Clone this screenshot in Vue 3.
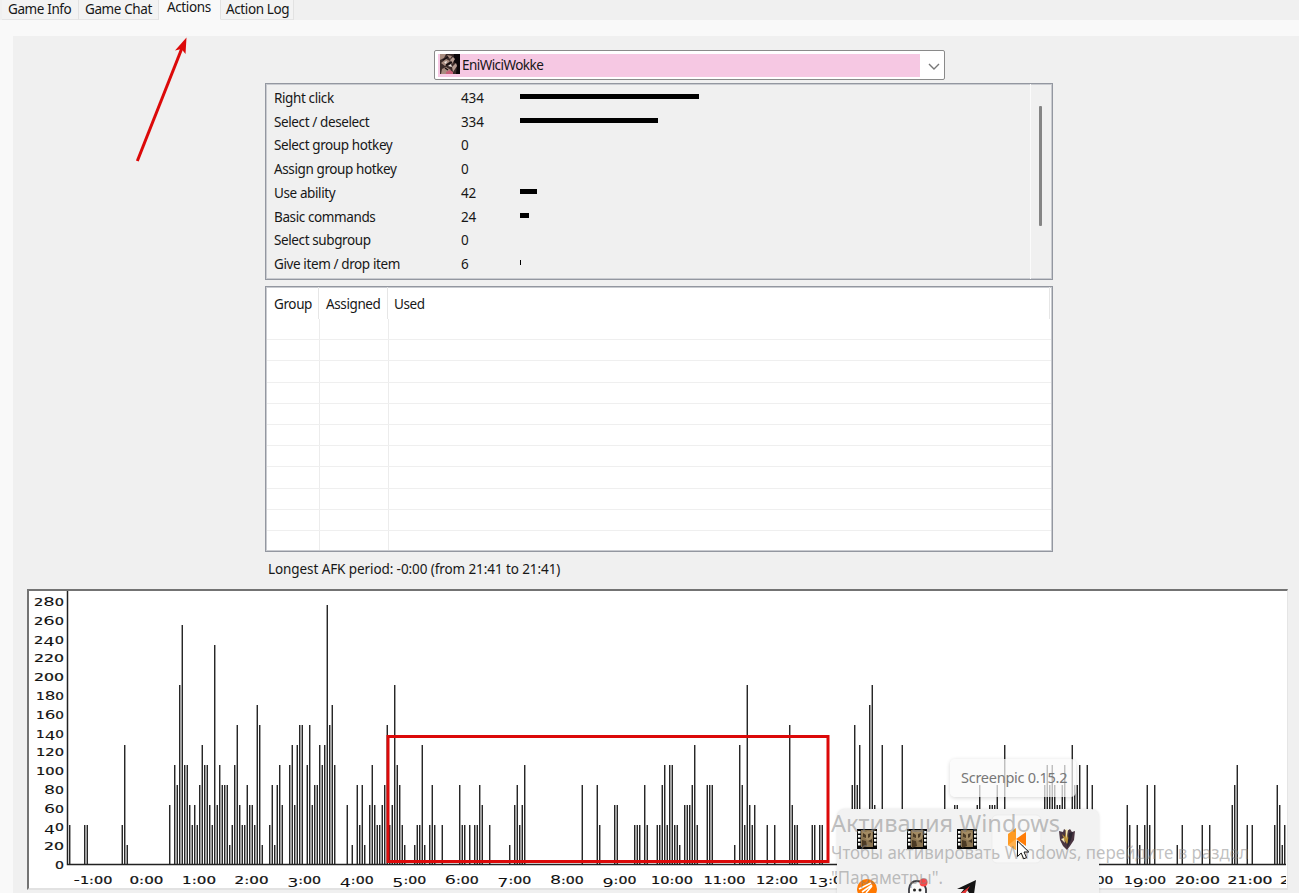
<script setup>
const tabs = [
  { name: 'Game Info', cls: 't1' },
  { name: 'Game Chat', cls: 't2' },
  { name: 'Actions', cls: 't3 active' },
  { name: 'Action Log', cls: 't4' },
]
const actions = [
  ['Right click', 434, 179],
  ['Select / deselect', 334, 138],
  ['Select group hotkey', 0, 0],
  ['Assign group hotkey', 0, 0],
  ['Use ability', 42, 17],
  ['Basic commands', 24, 9],
  ['Select subgroup', 0, 0],
  ['Give item / drop item', 6, 1.4],
]
// Each run is "first slot: level of every consecutive slot".
const runs = `0:2 6:22 21:261 40:3 42:549C553232465532B354441257322433287
77:1 80:241453 88:563677 95:57344656D785 111:3 113:1 115:4241 120:353223472395421
138:12261 144:242 149:2 156:422 160:2 162:2243 168:2 176:1 178:34235 205:4 211:42
218:33 226:222 230:42 235:2245255221 246:333462 255:444 266:1 268:6429323 279:2 282:2
288:7322 297:22 300:22 313:4746 320:893 325:6 333:6 350:4 354:33 363:34 368:3334
374:6 390:454543345 401:6445 407:5 409:4 423:32 427:21 430:242 434:4 443:1 445:2
453:2 456:2 465:345 471:2 473:2 482:24312`
const bars = []
for (const run of runs.split(/\s+/)) {
  const [start, levels] = run.split(':')
  ;[...levels].forEach((c, k) => {
    const n = parseInt(c, 16)
    bars.push({ x: 41.6 + 2.5 * (+start + k), h: 20 * n - 1 })
  })
}
const yTicks = Array.from({ length: 15 }, (_, i) => i * 20)
const yWidth = (n) => (n >= 200 ? 30 : n >= 100 ? 28 : n > 0 ? 20 : 9)
const xTicks = Array.from({ length: 24 }, (_, i) => i - 1)
const xWidth = (n) => (n < 0 ? 39 : n >= 20 ? 45 : n >= 10 ? 42 : 34)
// Old-style figures: 0-2 stay at x-height, 3 4 5 7 9 hang below the baseline.
const figures = (s) => {
  let y = 0
  return [...String(s)].map((c) => {
    const target = '34579'.includes(c) ? 2.5 : 0
    const dy = target - y
    y = target
    return { c, dy, cls: '012:'.includes(c) ? 'low' : 'tall' }
  })
}
</script>

<template>
  <div class="app">
    <nav class="tabs">
      <div v-for="t in tabs" :key="t.name" class="tab" :class="t.cls"><span>{{ t.name }}</span></div>
    </nav>
    <main class="page">
      <div class="column">
        <div class="select">
          <div class="choice">
            <svg class="avatar" width="20" height="20" viewBox="0 0 20 20">
              <rect width="20" height="20" fill="#3c2c2a" />
              <path d="M0 0h6l-2 4-4 2zM1 9l5-4 4 2-5 5zM7 1l5 1-2 3zM2 15l4-2 5 3-4 4H1z" fill="#a98d80" />
              <path d="M14 0h6v20h-4l1-9-4-4z" fill="#0c0709" />
              <path d="M10 6l3-3 2 2-3 5zM12 13l4-4 1 3-4 6z" fill="#b49b90" />
              <path d="M4 8l3-1-1 3zM8 12l3-2 1 3z" fill="#f0e8e2" />
              <path d="M6 18l4-2 3 2v2H6z" fill="#c85f78" />
              <path d="M3 6l5-3M6 11l6-3M5 14l3 2" stroke="#160e10" stroke-width="1.4" />
            </svg>
            <span>EniWiciWokke</span>
          </div>
          <svg class="chev" width="12" height="8" viewBox="0 0 12 8"><path d="M1 1l5 5 5-5" fill="none" stroke="#777" stroke-width="1.4" /></svg>
        </div>
        <section class="stats">
          <div class="rows">
            <div v-for="a in actions" :key="a[0]" class="row">
              <span class="name">{{ a[0] }}</span>
              <span class="num">{{ a[1] }}</span>
              <i class="meter" :style="{ width: a[2] + 'px' }"></i>
            </div>
          </div>
          <div class="scroll"><i></i></div>
        </section>
        <section class="groups">
          <div class="head"><span class="g1">Group</span><span class="g2">Assigned</span><span class="g3">Used</span></div>
          <div class="body">
            <div v-for="n in 11" :key="n" class="line"><i></i><i></i></div>
          </div>
        </section>
        <p class="afk">Longest AFK period: -0:00 (from 21:41 to 21:41)</p>
      </div>
      <section class="chart">
        <svg width="1258" height="299" viewBox="0 0 1258 299">
          <rect v-for="b in bars" :key="b.x" :x="b.x - 0.5" :y="273 - b.h" width="1.3" :height="b.h" fill="#111" />
          <path d="M39.500 0V273.500H1258" fill="none" stroke="#222" stroke-width="1.500" />
          <g class="axis">
            <text v-for="n in yTicks" :key="n" x="36" :y="278 - n * 0.939" text-anchor="end" :textLength="yWidth(n)" lengthAdjust="spacingAndGlyphs"><tspan v-for="(f, k) in figures(n)" :key="k" :dy="f.dy" :class="f.cls">{{ f.c }}</tspan></text>
            <text v-for="n in xTicks" :key="n" :x="118.500 + n * 52.55 - (n < 0 ? 1 : 0)" y="293" text-anchor="middle" :textLength="xWidth(n)" lengthAdjust="spacingAndGlyphs"><tspan v-for="(f, k) in figures(n + ':00')" :key="k" :dy="f.dy" :class="f.cls">{{ f.c }}</tspan></text>
          </g>
        </svg>
      </section>
    </main>

    <svg class="notes" width="1299" height="893" viewBox="0 0 1299 893">
      <path d="M137.300 161L182 48" stroke="#dc0909" stroke-width="3" />
      <path d="M186.500 37.500L185.500 54L181.500 49L175 50.500Z" fill="#dc0909" />
      <rect x="388" y="736.500" width="440" height="125" fill="none" stroke="#dc0909" stroke-width="3" />
    </svg>

    <aside class="tray">
      <svg width="262" height="84" viewBox="0 0 262 84">
        <rect x="155" y="6" width="49" height="48" rx="5" fill="#f8f8f8" stroke="#ededed" />
        <g v-for="x in [20, 70, 120]" :key="x" :transform="`translate(${x} 20)`">
          <rect width="20" height="20" fill="#080808" />
          <rect x="4" y="1" width="12" height="17" fill="#8b7450" />
          <path d="M5 2l4 1 2-1 4 1v6l-2 4-3-2-4-3z" fill="#a48c64" />
          <path d="M6 4l3 2v3l-3-1zM11 5l3-1-1 4-2 1zM5 11l4 1 1 5-5 2zM11 12l4-2v4z" fill="#4b3a25" />
          <path d="M1 2h2.500v2.500H1zM1 6h2.500v2.500H1zM1 10h2.500v2.500H1zM1 14h2.500v2.500H1zM17 2h2.500v2.500H17zM17 6h2.500v2.500H17zM17 10h2.500v2.500H17zM17 14h2.500v2.500H17z" fill="#f4f4ee" />
        </g>
        <path d="M171 25l8-6v22l-8-5z" fill="#ff9a22" />
        <path d="M171 36l8-6v11z" fill="#ffb04c" />
        <path d="M179 30l10-7v14z" fill="#ff7d08" />
        <path d="M222 22l4 1 1-3 3 2 3-2 2 3 3-1-1 9-4 6-3 4-4-4-3-6z" fill="#4a3541" />
        <path d="M225 25l3 3 1-7 2 8 4-4-2 6-3 4-3-5z" fill="#b88f35" />
        <path d="M228.500 20l1 10 1.500-9zM224 30l4 4-1-5z" fill="#f5e6b2" />
        <path d="M232 24l4-1-2 8-4 8 1-8z" fill="#2b2430" />
        <circle cx="30" cy="80" r="10" fill="#ff7800" />
        <path d="M22 80l12-6M25 83l10-7M29 84l6-7" fill="none" stroke="#fff" stroke-width="1.600" />
        <path d="M72 84v-4q1-8 8-8t9 8v4" fill="#fafafa" stroke="#3b3b40" stroke-width="1.800" />
        <circle cx="77.500" cy="81" r="1.500" fill="#222" /><circle cx="83" cy="81" r="1.500" fill="#222" />
        <circle cx="86.500" cy="73.500" r="4" fill="#fa4646" />
        <path d="M120 80l19-9-2 14h-4l-3-4-5 4h-2l4-5z" fill="#151515" />
        <path d="M124 84l9-7-5 8z" fill="#e23333" />
      </svg>
    </aside>
    <div class="tip"><span>Screenpic 0.15.2</span></div>
    <svg class="notes" width="1299" height="893" viewBox="0 0 1299 893">
      <g class="mark">
        <text x="831" y="832" class="big" textLength="229" lengthAdjust="spacingAndGlyphs">Активация Windows</text>
        <text x="831" y="859" class="small" textLength="418" lengthAdjust="spacingAndGlyphs">Чтобы активировать Windows, перейдите в раздел</text>
        <text x="831" y="884" class="small" textLength="112" lengthAdjust="spacingAndGlyphs">"Параметры".</text>
      </g>
      <path d="M1017.500 841v15.500l3.700-3.500 2.500 5.800 2.800-1.200-2.500-5.600h4.800z" fill="#fff" stroke="#111" />
    </svg>
  </div>
</template>

<style>
body { margin: 0; }
</style>
<style scoped>
.app { position: relative; width: 1299px; height: 893px; overflow: hidden; background: #f9f9f9; font: 13.5px/18px "Noto Sans", sans-serif; letter-spacing: -.39px; color: #171717; white-space: nowrap; }
.tabs { display: flex; height: 20px; background: #f0f0f0; padding-left: 2px; box-sizing: border-box; }
.tab { height: 20px; box-sizing: border-box; background: #f3f3f3; border-right: 1px solid #e2e2e2; border-bottom: 1px solid #e5e5e5; padding-left: 6px; }
.t1 { width: 77px; }
.t2 { width: 80px; }
.t3 { width: 62px; }
.t4 { width: 73px; padding-left: 5px; }
.tab.active { background: #f9f9f9; border-bottom-color: #f9f9f9; padding-left: 8px; line-height: 14px; }
.page { margin: 16px 0 0 13px; height: 857px; background: #f0f0f0; padding-top: 14px; box-sizing: border-box; }
.column { width: 788px; margin-left: 252px; display: flex; flex-direction: column; }
.select { width: 511px; height: 30px; box-sizing: border-box; margin-left: 169px; border: 1px solid #8a8a8a; border-radius: 2px; background: #fff; padding: 3px; display: flex; align-items: center; }
.choice { background: #f6c8e3; width: 482px; height: 23px; display: flex; align-items: center; gap: 2px; letter-spacing: -.55px; }
.choice .avatar { margin: -2px 0 0 2px; }
.chev { margin: 3px 0 0 8px; }
.stats { margin-top: 3px; height: 197px; box-sizing: border-box; border: 1px solid #9397a0; box-shadow: inset 0 0 0 1px #c9cbd0; display: flex; }
.rows { flex: 1; padding-top: 2px; }
.row { display: flex; align-items: center; height: 23.75px; padding-left: 8px; }
.name { width: 187px; }
.num { width: 59px; letter-spacing: -.1px; }
.meter { height: 5px; background: #000; margin-top: -3px; }
.scroll { width: 22px; border-left: 1px solid #fbfbfb; box-sizing: border-box; display: flex; padding: 22px 0 0 8px; }
.scroll i { width: 3px; height: 120px; background: #858585; border-radius: 1px; }
.groups { margin-top: 6px; height: 266px; box-sizing: border-box; border: 1px solid #9397a0; box-shadow: inset 0 0 0 1px #c9cbd0; background: #fff; }
.head { display: flex; height: 32px; line-height: 34px; }
.head span { box-sizing: border-box; border-right: 1px solid #e6e6e6; padding-left: 8px; }
.g1 { width: 53px; }
.g2 { width: 69px; }
.head .g2 { padding-left: 7px; }
.g3 { width: 662px; }
.head .g3 { padding-left: 6px; }
.body { height: 231px; overflow: hidden; margin: 0 1px; }
.line { height: 21.2px; box-sizing: border-box; border-bottom: 1px solid #efefef; display: flex; }
.line:last-child { border-bottom: 0; }
.line i { width: 52px; border-right: 1px solid #ececec; }
.line i + i { width: 68px; }
.afk { margin: 8px 0 0 3px; letter-spacing: -.09px; }
.chart { margin: 11px 0 0 14px; width: 1261px; height: 301px; box-sizing: border-box; border: 2px solid #737373; border-right: 1px solid #e5e5e5; border-bottom: 2px solid #e2e2e2; background: #fff; overflow: hidden; }
.chart svg { display: block; margin-left: -1px; }
.axis { font: 13px "DejaVu Sans", sans-serif; fill: #111; letter-spacing: 0; }
.low { font-size: 10.5px; stroke: #111; stroke-width: .2px; }
.tall { font-size: 13px; }
.notes { position: absolute; left: 0; top: 0; }
.tray { position: absolute; left: 837px; top: 809px; width: 262px; height: 90px; background: #f2f2f2; border-radius: 8px 8px 0 0; box-shadow: 0 0 3px rgba(0,0,0,.12); }
.tip { position: absolute; left: 950px; top: 759px; width: 126px; height: 38px; line-height: 37px; padding-left: 11px; box-sizing: border-box; background: rgba(249,249,249,.72); border-radius: 5px; color: #777; font-size: 14.5px; letter-spacing: -.25px; box-shadow: 0 1px 4px rgba(0,0,0,.16); }
.mark { fill: #858585; fill-opacity: .52; font-family: "Noto Sans", sans-serif; letter-spacing: 0; }
.big { font-size: 24px; }
.small { font-size: 18px; }
</style>
